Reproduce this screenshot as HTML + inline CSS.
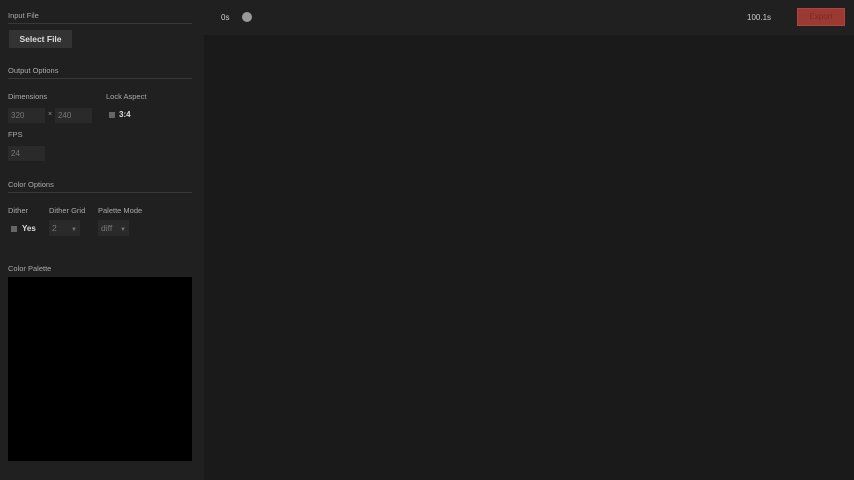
<!DOCTYPE html>
<html><head><style>
*{margin:0;padding:0;box-sizing:border-box}
body{width:854px;height:480px;background:#202020;font-family:"Liberation Sans",sans-serif;color:#bbb;position:relative;overflow:hidden}
.a{position:absolute}
.lbl{font-size:7.5px;color:#aaa}
.hr{height:1px;background:#383838;left:8px;width:184px}
.inp{background:#2a2a2a;font-size:8px;color:#777;padding:3px 3px;height:15px;line-height:9px}
.main{left:204px;top:35px;width:650px;height:445px;background:#1a1a1a}
</style></head><body>
<div class="a main"></div>
<div class="a lbl" style="left:8px;top:11px">Input File</div>
<div class="a hr" style="top:23px"></div>
<div class="a" style="left:9px;top:30px;width:63px;height:18px;background:#333;color:#ddd;font-size:8.5px;font-weight:bold;text-align:center;line-height:18px">Select File</div>
<div class="a lbl" style="left:8px;top:66px">Output Options</div>
<div class="a hr" style="top:78px"></div>
<div class="a lbl" style="left:8px;top:92px">Dimensions</div>
<div class="a lbl" style="left:106px;top:92px">Lock Aspect</div>
<div class="a inp" style="left:8px;top:108px;width:37px">320</div>
<div class="a" style="left:48px;top:111px;font-size:7px;color:#999">×</div>
<div class="a inp" style="left:55px;top:108px;width:37px">240</div>
<div class="a" style="left:109px;top:112px;width:6px;height:6px;background:#666"></div>
<div class="a" style="left:119px;top:110px;font-size:8px;font-weight:bold;color:#ddd">3:4</div>
<div class="a lbl" style="left:8px;top:130px">FPS</div>
<div class="a inp" style="left:8px;top:146px;width:37px">24</div>
<div class="a lbl" style="left:8px;top:180px">Color Options</div>
<div class="a hr" style="top:192px"></div>
<div class="a lbl" style="left:8px;top:206px">Dither</div>
<div class="a lbl" style="left:49px;top:206px">Dither Grid</div>
<div class="a lbl" style="left:98px;top:206px">Palette Mode</div>
<div class="a" style="left:11px;top:226px;width:6px;height:6px;background:#666"></div>
<div class="a" style="left:22px;top:224px;font-size:8px;font-weight:bold;color:#ddd">Yes</div>
<div class="a inp" style="left:49px;top:220px;width:31px;height:16px;font-size:8.5px;line-height:10px">2 <span style="float:right;font-size:6px;margin-top:2px">▼</span></div>
<div class="a inp" style="left:98px;top:220px;width:31px;height:16px;font-size:8.5px;line-height:10px">diff <span style="float:right;font-size:6px;margin-top:2px">▼</span></div>
<div class="a lbl" style="left:8px;top:264px">Color Palette</div>
<div class="a" style="left:8px;top:277px;width:184px;height:184px;background:#000"></div>
<div class="a" style="left:221px;top:13px;font-size:8px;color:#ccc">0s</div>
<div class="a" style="left:242px;top:12px;width:10px;height:10px;border-radius:50%;background:#999"></div>
<div class="a" style="left:747px;top:13px;font-size:8px;color:#ccc">100.1s</div>
<div class="a" style="left:797px;top:8px;width:48px;height:18px;background:#9a3a33;border:1px solid #b0443c;color:#7a2a25;font-size:8px;text-align:center;line-height:16px">Export</div>
</body></html>
